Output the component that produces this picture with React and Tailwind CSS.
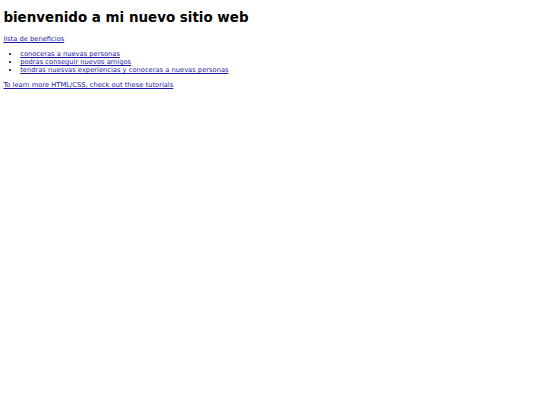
import React from "react";

// small landing page: title, link, list of benefits, tutorials link
export default function App() {
  return (
    <div className="min-h-screen bg-white px-[3.4px] pt-[10px] font-['DejaVu_Sans',sans-serif] text-[6.72px] leading-[8px] text-black">
      <h1 className="mb-[9px] text-[13.44px] font-bold leading-[16px]">
        bienvenido a mi nuevo sitio web
      </h1>

      <p className="my-[7px]">
        <a href="#" className="text-[#1a1aa8] underline">lista de beneficios</a>
      </p>

      <ul className="my-[7px] list-disc pl-[16.8px]">
        <li>
          <a href="#" className="text-[#1a1aa8] underline">conoceras a nuevas personas</a>
        </li>
        <li>
          <a href="#" className="text-[#1a1aa8] underline">podras conseguir nuevos amigos</a>
        </li>
        <li>
          <a href="#" className="text-[#1a1aa8] underline">tendras nuesvas experiencias y conoceras a nuevas personas</a>
        </li>
      </ul>

      <p className="my-[7px]">
        <a href="#" className="text-[#1a1aa8] underline">To learn more HTML/CSS, check out these tutorials</a>
      </p>
    </div>
  );
}
